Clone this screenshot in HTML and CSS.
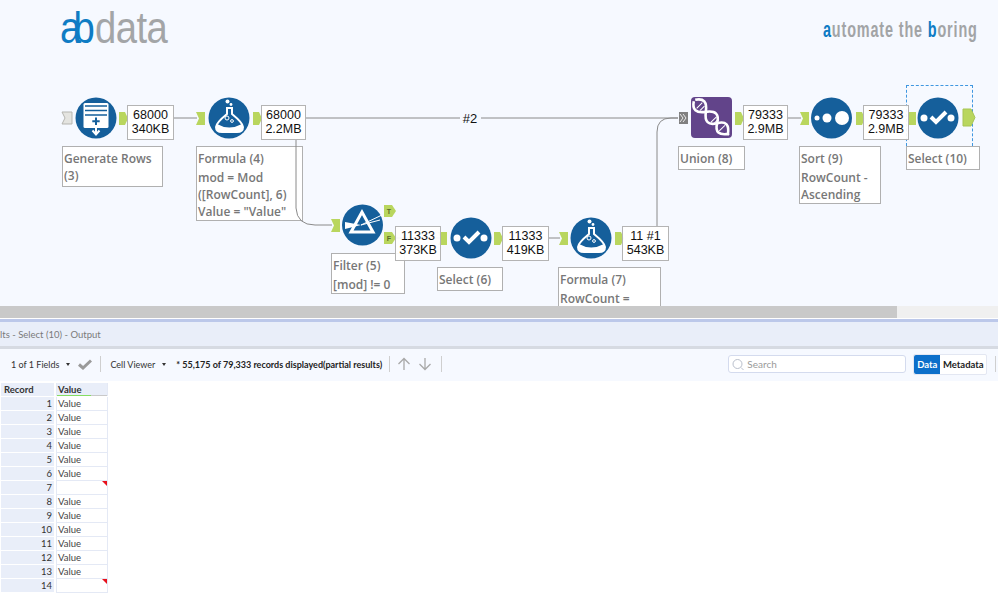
FILE: index.html
```html
<!DOCTYPE html>
<html lang="en">
<head>
<meta charset="utf-8">
<title>Workflow results</title>
<link rel="stylesheet" href="styles.css">
</head>
<body>
<div class="app">
  <section class="canvas">
    <div class="logo"><span class="logo-ab">ab</span><span class="logo-data">data</span></div>
    <div class="tagline"><i>a</i>utomate the <i>b</i>oring</div>

    <div class="note a1"><p>Generate Rows (3)</p></div>
    <div class="note a2"><p class="title">Formula (4)</p><p>mod = Mod ([RowCount], 6)<br>Value = "Value"</p></div>
    <div class="note a3"><p class="title">Filter (5)</p><p>[mod] != 0</p></div>
    <div class="note a4"><p>Select (6)</p></div>
    <div class="note a5"><p class="title">Formula (7)</p><p>RowCount =</p></div>
    <div class="note a6"><p>Union (8)</p></div>
    <div class="note a7"><p class="title">Sort (9)</p><p>RowCount - Ascending</p></div>
    <div class="note a8"><p>Select (10)</p></div>
    <div class="selection"></div>

    <svg class="diagram" width="998" height="306" viewBox="0 0 998 306">
      <defs>
        <polygon id="out" points="0,0 6,0 9,6.500 6,13 0,13"/>
        <polygon id="in" points="0,0 9,0 9,13 0,13 3,6.500"/>
        <g id="flask">
          <circle r="20.5" class="blue"/>
          <circle cx="-1.5" cy="-16.5" r="2" class="wf"/>
          <circle cx="2" cy="-13.500" r="1.4" class="wf"/>
          <path d="M-3 -10 H4 M-2 -10 V-4 Q-13 5 -13 9 Q-13 14 -7 14 H8 Q14 14 14 9 Q14 5 3 -4 V-10" class="ws"/>
          <path d="M-12 6 Q0 13 13 6 Q15 14 8 14 H-7 Q-14 14 -12 6 Z" class="wf"/>
          <circle cx="-2" cy="0" r="2" class="ws1"/>
          <circle cx="3" cy="3" r="1.4" class="ws1"/>
        </g>
        <g id="select">
          <circle r="20.5" class="blue"/>
          <circle cx="-14" cy="0" r="3.5" class="wf"/>
          <circle cx="13" cy="0" r="3.5" class="wf"/>
          <path d="M-7 -1 L-2 4 L8 -6" class="ws3"/>
        </g>
      </defs>

      <g class="wires">
        <path d="M174 118 H197"/>
        <path d="M306 118 H460 M481 118 H678"/>
        <path d="M296 140 V208 Q297 225 315 225 H332"/>
        <path d="M395 238 H440"/>
        <path d="M549 238 H560"/>
        <path d="M657 226 V132 Q657 118 671 118 H678"/>
        <path d="M788 118 H801"/>
      </g>

      <polygon points="62,112 72,112 72,124 62,124 65,118" class="gray-in"/>
      <circle cx="96" cy="118" r="20.5" class="blue"/>
      <rect x="83.500" y="103" width="25" height="25" rx="1.500" class="wf"/>
      <path d="M85 106 H107 M85 110.500 H107 M85 115 H107" class="bs"/>
      <path d="M96 117.500 V125 M92.300 121.200 H99.700" class="bs2"/>
      <path d="M96 128 V134 M92.500 130.500 L96 134.500 L99.500 130.500" class="ws"/>
      <use href="#out" x="119" y="112" class="anchor"/>

      <use href="#in" x="196" y="112" class="anchor"/>
      <use href="#flask" x="229" y="118"/>
      <use href="#out" x="253" y="112" class="anchor"/>

      <use href="#in" x="331" y="219" class="anchor"/>
      <circle cx="362.500" cy="225" r="20.500" class="blue"/>
      <path d="M362 212 L351 232 H373 Z" class="ws3t"/>
      <polygon points="345,222 361,225 345,229" class="wf"/>
      <path d="M361 225 L382 215 M361 225 L380 220" class="ws1"/>
      <path d="M384 205 H392 L396 211 L392 217 H384 Z" class="anchor"/>
      <text x="389" y="214" class="pin">T</text>
      <path d="M384 232 H392 L396 238 L392 244 H384 Z" class="anchor"/>
      <text x="389" y="241" class="pin">F</text>

      <use href="#in" x="438" y="232" class="anchor"/>
      <use href="#select" x="471" y="238"/>
      <use href="#out" x="494" y="232" class="anchor"/>

      <use href="#in" x="559" y="232" class="anchor"/>
      <use href="#flask" x="591" y="238"/>
      <use href="#out" x="615" y="232" class="anchor"/>

      <rect x="679" y="112" width="9" height="12" class="dark-in"/>
      <path d="M680 114 L683 118 L680 122 M683 114 L686 118 L683 122" class="chev"/>
      <rect x="691" y="97" width="41" height="41" rx="4" class="purple"/>
      <g transform="translate(711.500 117.500) rotate(45)">
        <path d="M-24 -1 Q-17 -12 -8 0 T8 0 T24 1" class="ws2"/>
        <path d="M-24 1 Q-17 12 -8 0 T8 0 T24 -1" class="ws2"/>
        <path d="M-17 -4 V4 M-13 -3 V3 M3 -4 V4 M6 -4 V4 M15 -4 V4" class="ws1"/>
      </g>
      <use href="#out" x="735" y="112" class="anchor"/>

      <use href="#in" x="800" y="112" class="anchor"/>
      <circle cx="831.500" cy="118" r="20.500" class="blue"/>
      <circle cx="817" cy="118" r="2.500" class="wf"/>
      <circle cx="827" cy="118" r="4.500" class="wf"/>
      <circle cx="842" cy="118" r="7" class="wf"/>
      <use href="#out" x="856" y="112" class="anchor"/>

      <use href="#select" x="938" y="118"/>
      <polygon points="963,109 971,109 975,117.500 971,126 963,126" class="anchor edge"/>
      <text x="470" y="122.500" class="wire-label">#2</text>
    </svg>

    <div class="stat s1">68000<br>340KB</div>
    <div class="stat s2">68000<br>2.2MB</div>
    <div class="stat s3">11333<br>373KB</div>
    <div class="stat s4">11333<br>419KB</div>
    <div class="stat s5">11 #1<br>543KB</div>
    <div class="stat s6">79333<br>2.9MB</div>
    <div class="stat s7">79333<br>2.9MB</div>
    <svg class="select-anchor" width="7" height="13" viewBox="0 0 7 13"><rect width="7" height="13" class="anchor"/></svg>
  </section>

  <div class="hscroll"><div class="hscroll-thumb"></div></div>

  <div class="panel-title">lts - Select (10) - Output</div>

  <div class="toolbar">
    <span class="tool">1 of 1 Fields</span>
    <span class="caret"></span>
    <svg class="check" width="14" height="11" viewBox="0 0 14 11"><path d="M1 5.500 L5 9 L13 1.500"/></svg>
    <span class="sep"></span>
    <span class="tool">Cell Viewer</span>
    <span class="caret"></span>
    <strong class="status">* 55,175 of 79,333 records displayed(partial results)</strong>
    <span class="sep"></span>
    <svg class="arrow" width="14" height="14" viewBox="0 0 14 14"><path d="M7 13 V2 M1.500 7 L7 1.500 L12.500 7"/></svg>
    <svg class="arrow" width="14" height="14" viewBox="0 0 14 14"><path d="M7 1 V12 M1.500 7 L7 12.500 L12.500 7"/></svg>
    <span class="sep"></span>
    <div class="search">
      <svg width="12" height="12" viewBox="0 0 12 12"><circle cx="5.500" cy="6" r="4.500"/><path d="M9 9.500 L11.500 12"/></svg>
      <span>Search</span>
    </div>
    <div class="segment"><span class="seg seg-on">Data</span><span class="seg">Metadata</span></div>
    <span class="sep sep-end"></span>
  </div>

  <div class="grid">
    <div class="head rec">Record</div><div class="head val">Value</div>
    <div class="rec num">1</div><div class="val">Value</div>
    <div class="rec num">2</div><div class="val">Value</div>
    <div class="rec num">3</div><div class="val">Value</div>
    <div class="rec num">4</div><div class="val">Value</div>
    <div class="rec num">5</div><div class="val">Value</div>
    <div class="rec num">6</div><div class="val">Value</div>
    <div class="rec num">7</div><div class="val null"></div>
    <div class="rec num">8</div><div class="val">Value</div>
    <div class="rec num">9</div><div class="val">Value</div>
    <div class="rec num">10</div><div class="val">Value</div>
    <div class="rec num">11</div><div class="val">Value</div>
    <div class="rec num">12</div><div class="val">Value</div>
    <div class="rec num">13</div><div class="val">Value</div>
    <div class="rec num">14</div><div class="val null"></div>
  </div>
</div>
</body>
</html>
```

FILE: styles.css
```css
* { box-sizing: border-box; }
html, body { margin: 0; height: 100%; overflow: hidden; background: #fff; }
.app { width: 998px; height: 593px; display: flex; flex-direction: column; overflow: hidden; font-family: "Lato", "Open Sans", sans-serif; }

/* workflow canvas: nodes sit at free positions */
.canvas { position: relative; height: 306px; flex: none; background: #f6f9ff; overflow: hidden; }
.logo { position: absolute; left: 60px; top: 2px; font-family: "Liberation Sans", sans-serif; font-size: 45px; line-height: 52px; white-space: nowrap; transform: scaleX(.85); transform-origin: 0 0; }
.logo-ab { color: #0f7cc4; letter-spacing: -9px; margin-right: 9px; }
.logo-data { color: #a3a5a7; letter-spacing: -.6px; }
.tagline { position: absolute; left: 823px; top: 16px; width: 240px; font-family: "Liberation Sans", sans-serif; font-size: 22px; font-weight: 700; line-height: 28px; letter-spacing: 1.300px; color: #a2a4a6; white-space: nowrap; transform: scaleX(.655); transform-origin: 0 0; }
.tagline i { font-style: normal; color: #0f7cc4; }
.diagram { position: absolute; left: 0; top: 0; }

.blue { fill: #155f9b; }
.purple { fill: #62448a; }
.wf { fill: #fff; }
.ws { fill: none; stroke: #fff; stroke-width: 2; }
.ws1 { fill: none; stroke: #fff; stroke-width: 1; }
.ws2 { fill: none; stroke: #fff; stroke-width: 2.6; }
.ws3 { fill: none; stroke: #fff; stroke-width: 4; }
.ws3t { fill: none; stroke: #fff; stroke-width: 3; }
.bs { fill: none; stroke: #155f9b; stroke-width: 1.500; }
.bs2 { fill: none; stroke: #155f9b; stroke-width: 2; }
.anchor { fill: #b9d65e; }
.edge { stroke: #a8c555; stroke-width: 1; }
.gray-in { fill: #e4e4e0; stroke: #b5b5b0; stroke-width: 1; }
.dark-in { fill: #808080; }
.chev { fill: none; stroke: #e8e8e8; stroke-width: 1; }
.wires path { fill: none; stroke: #8a8a8a; stroke-width: 1; }
.pin { font: bold 7px "Liberation Sans", sans-serif; fill: #5b6b2a; text-anchor: middle; }
.wire-label { font: 13px "Liberation Sans", sans-serif; fill: #111; text-anchor: middle; }
.select-anchor { position: absolute; left: 909px; top: 112px; }

.stat { position: absolute; top: 105px; height: 35px; padding-top: 2px; background: rgba(255, 255, 255, .93); border: 1px solid #b4b4b4; font-family: "Liberation Sans", sans-serif; font-size: 12.500px; line-height: 14px; color: #111; text-align: center; white-space: nowrap; }
.s1 { left: 127px; width: 47px; }
.s2 { left: 261px; width: 45px; }
.s3 { left: 395px; top: 226px; width: 46px; }
.s4 { left: 502px; top: 226px; width: 47px; }
.s5 { left: 622px; top: 226px; width: 47px; }
.s6 { left: 743px; width: 45px; }
.s7 { left: 863px; width: 46px; }

.note { position: absolute; padding: 3px 2px 0 1px; background: #fff; border: 1px solid #b0b0b0; font-family: "Open Sans", sans-serif; font-size: 12px; font-weight: 600; line-height: 17px; color: #777; }
.note p { margin: 0; }
.note .title { margin-bottom: 2px; }
.a1 { left: 62px; top: 146px; width: 101px; height: 41px; }
.a2 { left: 196px; top: 146px; width: 107px; height: 75px; }
.a3 { left: 331px; top: 253px; width: 74px; height: 41px; }
.a4 { left: 437px; top: 267px; width: 66px; height: 24px; }
.a5 { left: 558px; top: 267px; width: 103px; height: 60px; }
.a6 { left: 678px; top: 146px; width: 67px; height: 24px; }
.a7 { left: 799px; top: 146px; width: 82px; height: 58px; }
.a8 { left: 906px; top: 146px; width: 74px; height: 24px; }
.selection { position: absolute; left: 906px; top: 85px; width: 67px; height: 61px; border: 1px dashed #3f97e0; border-bottom: 0; }

/* scrollbar */
.hscroll { height: 13px; flex: none; background: #f0f0f0; border-bottom: 1px solid #fff; }
.hscroll-thumb { width: 897px; height: 12px; background: #c9c9c9; }

/* results panel */
.panel-title { height: 30px; flex: none; padding-top: 6px; background: #e9eef9; border-top: 3px solid #bcc8ea; border-bottom: 3px solid #d6dae2; font-size: 9.500px; line-height: 13px; color: #7a7a7a; white-space: nowrap; }
.toolbar { height: 32px; flex: none; display: flex; align-items: center; padding: 0 0 2px 11px; background: #f6f9ff; font-size: 9px; color: #333; white-space: nowrap; }
.tool { flex: none; }
.caret { flex: none; width: 0; height: 0; margin-left: 7px; border: 2.500px solid transparent; border-top: 3px solid #333; border-bottom: 0; }
.check { flex: none; margin-left: 8px; }
.check path { fill: none; stroke: #9a9a9a; stroke-width: 3; }
.sep { flex: none; width: 1px; height: 16px; margin: 0 9px 0 8px; background: #cfcfcf; }
.status { flex: none; margin-left: 10px; width: 204px; font-size: 9px; font-weight: 700; color: #222; }
.status + .sep { margin-left: 9px; margin-right: 7px; }
.arrow { flex: none; }
.arrow path { fill: none; stroke: #a9a9a9; stroke-width: 1.300; }
.arrow + .arrow { margin-left: 7px; }
.arrow + .arrow + .sep { margin-left: 9px; }
.search { flex: none; display: flex; align-items: center; gap: 3px; width: 178px; height: 18px; margin-left: 277px; padding-left: 3px; background: #fff; border: 1px solid #d4dbee; border-radius: 3px; color: #9a9a9a; font-size: 10px; }
.search svg { fill: none; stroke: #b9bfcc; stroke-width: 1; }
.segment { flex: none; display: flex; margin-left: 7px; height: 21px; background: #fff; border: 1px solid #e3e7f2; border-radius: 2px; font-weight: 700; font-size: 9.500px; line-height: 19px; color: #222; }
.seg { width: 46px; text-align: center; }
.seg-on { width: 26px; background: #0c6fca; color: #fff; border-radius: 2px 0 0 2px; }
.sep-end { margin: 0 0 0 8px; }

/* data grid */
.grid { flex: 1; min-height: 0; display: grid; grid-template-columns: 53px 52px; grid-auto-rows: 13px; column-gap: 2px; row-gap: 1px; padding: 2px 0 0 1px; background: #fff; font-size: 9.500px; line-height: 13px; color: #444; overflow: hidden; }
.rec { background: #e9eef9; padding-right: 2px; }
.num { text-align: right; color: #333; }
.val { position: relative; padding-left: 1px; background: #fff; border-left: 1px solid #e4e9f5; border-right: 1px solid #e4e9f5; box-shadow: 0 1px 0 #e4e9f5; }
.head { font-weight: 700; color: #333; background: #e9eef9; padding: 0 0 0 3px; }
.head.val { padding-left: 1px; box-shadow: none; }
.head.val::after { content: ""; position: absolute; left: 0; right: 0; bottom: 0; height: 1px; background: linear-gradient(90deg, #86dd62 0 68%, #c9c9c9 68% 100%); }
.null::after { content: ""; position: absolute; top: 0; right: 0; width: 0; height: 0; border-top: 5px solid #e8101c; border-left: 5px solid transparent; }
```
